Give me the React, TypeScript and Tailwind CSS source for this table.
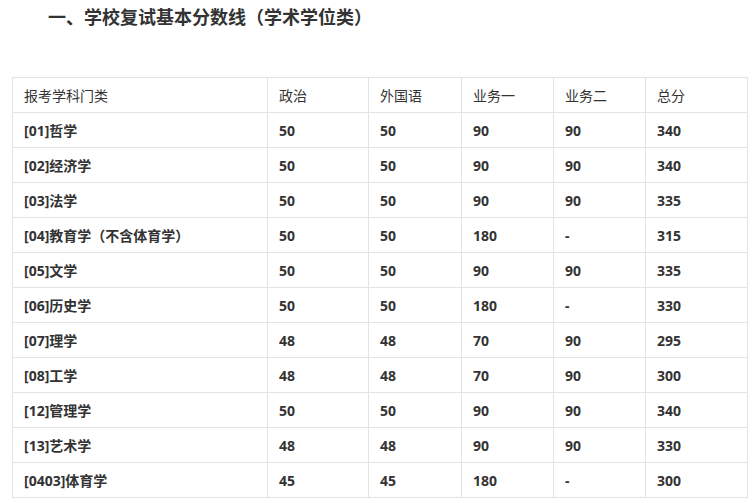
const rows: string[][] = [
  ['[01]哲学', '50', '50', '90', '90', '340'],
  ['[02]经济学', '50', '50', '90', '90', '340'],
  ['[03]法学', '50', '50', '90', '90', '335'],
  ['[04]教育学（不含体育学）', '50', '50', '180', '-', '315'],
  ['[05]文学', '50', '50', '90', '90', '335'],
  ['[06]历史学', '50', '50', '180', '-', '330'],
  ['[07]理学', '48', '48', '70', '90', '295'],
  ['[08]工学', '48', '48', '70', '90', '300'],
  ['[12]管理学', '50', '50', '90', '90', '340'],
  ['[13]艺术学', '48', '48', '90', '90', '330'],
  ['[0403]体育学', '45', '45', '180', '-', '300'],
]

const head = ['报考学科门类', '政治', '外国语', '业务一', '业务二', '总分']

const font = { fontFamily: '"Noto Sans", "Noto Sans CJK SC", sans-serif' }

export default function App() {
  return (
    <div className="w-[756px] h-[503px] bg-white text-[#333] overflow-hidden" style={font}>
      <h1 className="pl-[48px] pt-[5px] h-[77px] text-[18px] font-bold leading-[24px] text-[#333]">
        一、学校复试基本分数线（学术学位类）
      </h1>

      <table className="ml-[12px] w-[735px] table-fixed border-collapse text-[14px]">
        <colgroup>
          <col className="w-[255px]" />
          <col className="w-[101px]" />
          <col className="w-[93px]" />
          <col className="w-[92px]" />
          <col className="w-[92px]" />
          <col className="w-[102px]" />
        </colgroup>
        <thead>
          <tr className="h-[35px]">
            {head.map((h) => (
              <th key={h} className="border border-[#e3e3e3] px-[11px] text-left font-normal align-middle">
                {h}
              </th>
            ))}
          </tr>
        </thead>
        <tbody>
          {rows.map((r) => (
            <tr key={r[0]} className="h-[35px]">
              {r.map((c, i) => (
                <td key={i} className="border border-[#e3e3e3] px-[11px] font-bold align-middle">
                  {c}
                </td>
              ))}
            </tr>
          ))}
        </tbody>
      </table>
    </div>
  )
}
